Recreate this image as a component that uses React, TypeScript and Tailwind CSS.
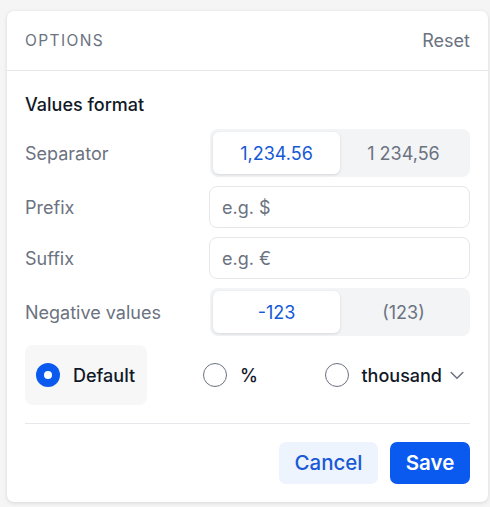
import React from "react";

function Segmented({ options, selected }: { options: string[]; selected: number }) {
  return (
    <div className="flex h-[48px] w-[260px] rounded-[8px] bg-[#f3f4f6] p-[3px]">
      {options.map((o, i) => (
        <div
          key={o}
          className={
            i === selected
              ? "flex flex-1 items-center justify-center rounded-[6px] bg-white text-[18px] text-[#1559d6] shadow-[0_1px_3px_rgba(0,0,0,0.12)]"
              : "flex flex-1 items-center justify-center text-[18px] text-[#6b7280]"
          }
        >
          {o}
        </div>
      ))}
    </div>
  );
}

function Input({ placeholder }: { placeholder: string }) {
  return (
    <div className="flex h-[42px] w-[261px] items-center rounded-[8px] border border-[#e5e7eb] bg-white pl-[12px] text-[18px] text-[#6b7280]">
      {placeholder}
    </div>
  );
}

function Row({ label, children }: { label: string; children: React.ReactNode }) {
  return (
    <div className="flex items-center justify-between">
      <span className="text-[18px] text-[#6b7280]">{label}</span>
      {children}
    </div>
  );
}

function Radio({ checked }: { checked?: boolean }) {
  return checked ? (
    <span className="flex h-[24px] w-[24px] items-center justify-center rounded-full bg-[#0a5af0]">
      <span className="h-[8px] w-[8px] rounded-full bg-white" />
    </span>
  ) : (
    <span className="h-[24px] w-[24px] rounded-full border border-[#6b7280] bg-white" />
  );
}

export default function App() {
  return (
    <div
      className="h-[507px] w-[490px] bg-[#f5f5f5] pl-[7px] pt-[11px]"
      style={{ fontFamily: "Inter, 'Noto Sans', sans-serif" }}
    >
      <div className="w-[481px] rounded-[7px] bg-white shadow-[0_1px_4px_rgba(0,0,0,0.12)]">
        <div className="flex h-[60px] items-center justify-between border-b border-[#e5e7eb] px-[18px]">
          <span className="text-[15.5px] tracking-[0.09em] text-[#6b7280]">OPTIONS</span>
          <span className="text-[18px] text-[#6b7280]">Reset</span>
        </div>
        <div className="px-[18px] pb-[18px] pt-[23px]">
          <div className="text-[18px] font-[470] leading-[22px] text-[#111827]">Values format</div>
          <div className="mt-[13px] flex flex-col gap-[9px]">
            <Row label="Separator">
              <Segmented options={["1,234.56", "1 234,56"]} selected={0} />
            </Row>
            <Row label="Prefix">
              <Input placeholder="e.g. $" />
            </Row>
            <Row label="Suffix">
              <Input placeholder="e.g. €" />
            </Row>
            <Row label="Negative values">
              <Segmented options={["-123", "(123)"]} selected={0} />
            </Row>
            <div className="flex h-[60px] items-center">
              <div className="flex h-[60px] w-[122px] items-center gap-[13px] rounded-[8px] bg-[#f7f7f8] pl-[11px]">
                <Radio checked />
                <span className="text-[18px] font-[470] text-[#111827]">Default</span>
              </div>
              <div className="ml-[56px] flex items-center gap-[13px]">
                <Radio />
                <span className="text-[18px] font-[470] text-[#111827]">%</span>
              </div>
              <div className="ml-auto mr-[3px] flex items-center">
                <Radio />
                <span className="ml-[12px] text-[18px] font-[470] text-[#111827]">thousand</span>
                <svg className="ml-[5px]" width="20" height="20" viewBox="0 0 24 24" fill="none" stroke="#6b7280" strokeWidth="1.8" strokeLinecap="round" strokeLinejoin="round">
                  <path d="M5 9l7 7 7-7" />
                </svg>
              </div>
            </div>
          </div>
          <div className="mt-[18px] border-t border-[#e5e7eb]" />
          <div className="mt-[18px] flex justify-end gap-[12px]">
            <button className="h-[42px] w-[99px] rounded-[7px] bg-[#eef4fd] text-[20.5px] font-medium text-[#1a5ad6]">Cancel</button>
            <button className="h-[42px] w-[80px] rounded-[7px] bg-[#0a5af0] text-[20.5px] font-semibold text-white">Save</button>
          </div>
        </div>
      </div>
    </div>
  );
}
